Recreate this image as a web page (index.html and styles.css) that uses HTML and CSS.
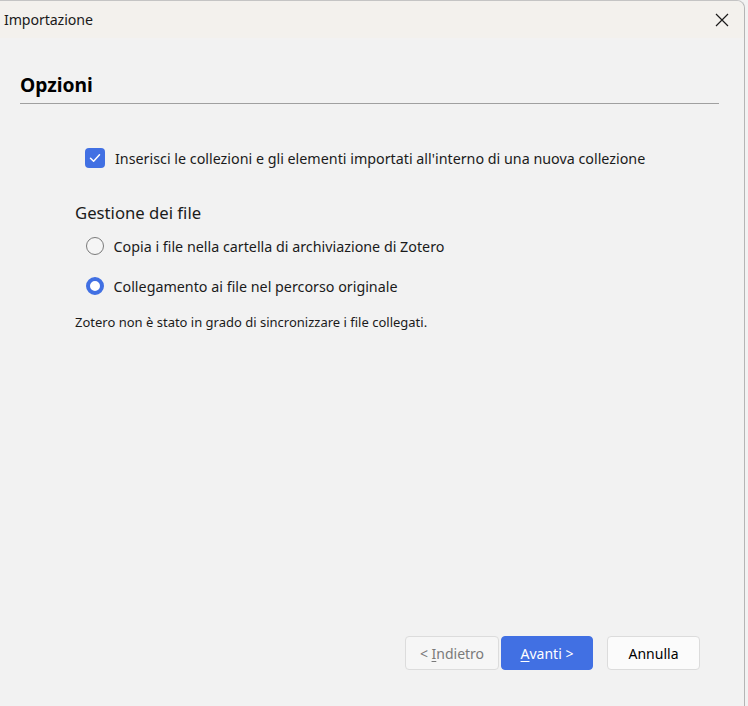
FILE: index.html
```html
<!DOCTYPE html>
<html lang="it">
<head>
<meta charset="utf-8">
<title>Importazione</title>
<link rel="stylesheet" href="styles.css">
</head>
<body>
<div class="window">
  <div class="titlebar">
    <span class="title">Importazione</span>
    <span class="close">
      <svg width="14" height="14" viewBox="0 0 14 14"><path d="M1 1L13 13M13 1L1 13" stroke="#1a1a1a" stroke-width="1.2" fill="none"/></svg>
    </span>
  </div>
  <div class="content">
    <h1 class="heading">Opzioni</h1>
    <div class="options">
      <label class="check-row">
        <span class="checkbox">
          <svg width="14" height="14" viewBox="0 0 14 14"><path d="M2.5 7.2L5.6 10.2L11.5 3.8" stroke="#fff" stroke-width="1.5" fill="none" stroke-linecap="round" stroke-linejoin="round"/></svg>
        </span>
        <span class="label">Inserisci le collezioni e gli elementi importati all'interno di una nuova collezione</span>
      </label>
      <div class="group-title">Gestione dei file</div>
      <label class="radio-row">
        <span class="radio"></span>
        <span class="label">Copia i file nella cartella di archiviazione di Zotero</span>
      </label>
      <label class="radio-row">
        <span class="radio selected"></span>
        <span class="label">Collegamento ai file nel percorso originale</span>
      </label>
      <p class="note">Zotero non è stato in grado di sincronizzare i file collegati.</p>
    </div>
    <div class="buttons">
      <button class="btn disabled">&lt; <u>I</u>ndietro</button>
      <button class="btn primary"><u>A</u>vanti &gt;</button>
      <button class="btn cancel">Annulla</button>
    </div>
  </div>
</div>
</body>
</html>
```
FILE: styles.css
```css
html, body {
  margin: 0;
  padding: 0;
  background: #f2f2f2;
}
body {
  font-family: "Noto Sans", "Open Sans", sans-serif;
  color: #1b1b1b;
  width: 748px;
  height: 706px;
  overflow: hidden;
}
.window {
  width: 745px;
  height: 706px;
  box-sizing: border-box;
  border-right: 1px solid #b5b5b5;
  border-top: 1px solid #c4c4c4;
  border-top-right-radius: 8px;
  background: #f2f2f2;
  display: flex;
  flex-direction: column;
}
.titlebar {
  height: 37px;
  background: #f3f1ed;
  display: flex;
  align-items: center;
  justify-content: space-between;
  border-top-right-radius: 8px;
}
.title {
  font-size: 14.2px;
  padding-left: 4px;
  color: #1a1a1a;
  letter-spacing: -0.1px;
}
.close {
  width: 14px;
  height: 14px;
  margin-right: 15px;
  display: flex;
}
.content {
  flex: 1;
  display: flex;
  flex-direction: column;
  padding: 0 25px 36px 20px;
}
.heading {
  margin: 34px 0 0 0;
  font-size: 19.3px;
  font-weight: bold;
  padding-bottom: 6px;
  border-bottom: 1px solid #a0a0a0;
  color: #000;
  line-height: 25px;
}
.options {
  flex: 1;
  padding-left: 55px;
  padding-top: 43px;
}
.check-row, .radio-row {
  display: flex;
  align-items: center;
  font-size: 14.3px;
}
.check-row { height: 22px; padding-left: 10px; }
.checkbox {
  width: 20px;
  height: 20px;
  border-radius: 4px;
  background: #4170e3;
  display: flex;
  align-items: center;
  justify-content: center;
  margin-right: 10px;
}
.group-title {
  font-size: 16.7px;
  margin-top: 33px;
  line-height: 22px;
}
.radio-row {
  height: 22px;
  margin-top: 11px;
  padding-left: 10px;
}
.radio-row + .radio-row { margin-top: 18px; }
.radio {
  width: 16px;
  height: 16px;
  border: 1.5px solid #7a7a7a;
  border-radius: 50%;
  background: #f5f5f5;
  margin-right: 10px;
  margin-left: 0.5px;
}
.radio.selected {
  border: 4.5px solid #4170e3;
  width: 10px;
  height: 10px;
  background: #fff;
}
.note {
  font-size: 13px;
  margin: 16px 0 0 0;
  line-height: 18px;
}
.buttons {
  display: flex;
  justify-content: flex-end;
  gap: 2px;
  margin-right: 19px;
}
.btn {
  height: 34px;
  width: 94px;
  border-radius: 4px;
  font-family: inherit;
  font-size: 14px;
  border: 1px solid #dcdcdc;
  background: #f6f6f6;
}
.btn.disabled { color: #7a7a7a; }
.btn.primary {
  background: #4170e3;
  border-color: #4170e3;
  color: #fff;
  width: 92px;
}
.btn.cancel {
  background: #fbfbfb;
  color: #000;
  margin-left: 12px;
  width: 93px;
}
u { text-decoration-thickness: 1px; text-underline-offset: 2px; }
```
